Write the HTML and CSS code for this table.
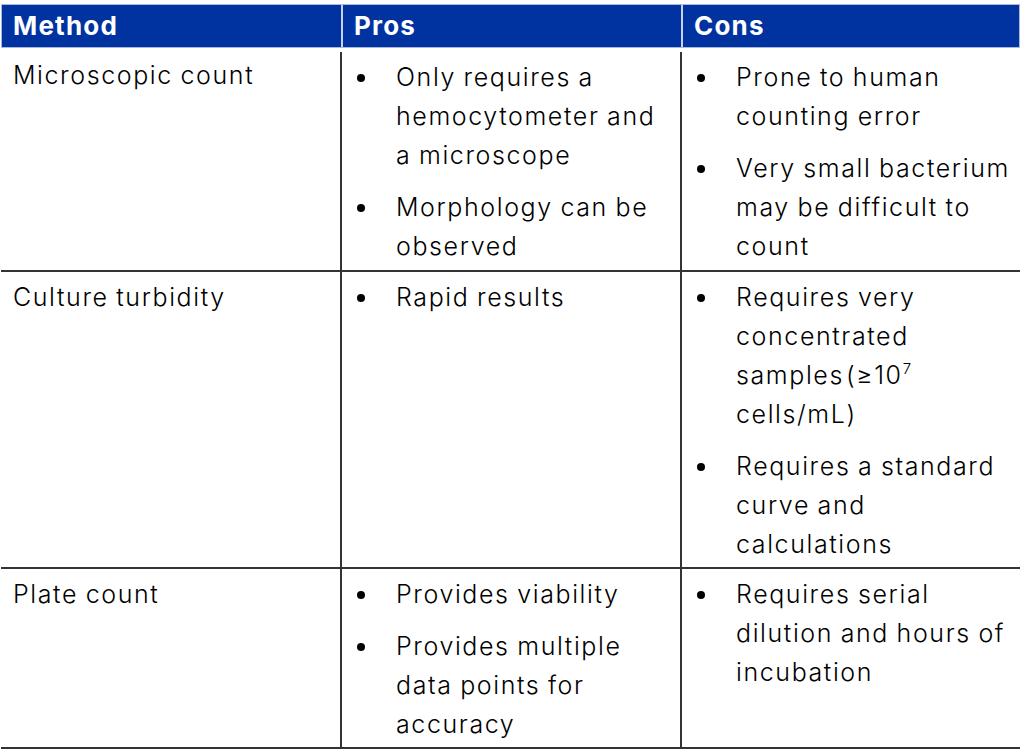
FILE: index.html
```html
<!DOCTYPE html>
<html>
<head>
<meta charset="utf-8">
<link rel="stylesheet" href="styles.css">
</head>
<body>
<div class="tbl">
  <div class="head">
    <div class="hc">Method</div>
    <div class="hc">Pros</div>
    <div class="hc">Cons</div>
  </div>
  <div class="body">
    <div class="row r1">
      <div class="c method">Microscopic count</div>
      <div class="c">
        <ul>
          <li>Only requires a<br>hemocytometer and<br>a microscope</li>
          <li>Morphology can be<br>observed</li>
        </ul>
      </div>
      <div class="c">
        <ul>
          <li>Prone to human<br>counting error</li>
          <li>Very small bacterium<br>may be difficult to<br>count</li>
        </ul>
      </div>
    </div>
    <div class="row r2">
      <div class="c method">Culture turbidity</div>
      <div class="c">
        <ul>
          <li>Rapid results</li>
        </ul>
      </div>
      <div class="c">
        <ul>
          <li>Requires very<br>concentrated<br>samples<span class="sp">(≥10<span class="sup">7</span></span><br>cells/mL)</li>
          <li>Requires a standard<br>curve and<br>calculations</li>
        </ul>
      </div>
    </div>
    <div class="row r3">
      <div class="c method">Plate count</div>
      <div class="c">
        <ul>
          <li>Provides viability</li>
          <li>Provides multiple<br>data points for<br>accuracy</li>
        </ul>
      </div>
      <div class="c">
        <ul>
          <li>Requires serial<br>dilution and hours of<br>incubation</li>
        </ul>
      </div>
    </div>
  </div>
</div>
</body>
</html>
```
FILE: styles.css
```css
html, body {
  margin: 0;
  padding: 0;
  background: #fff;
}
body {
  font-family: Inter, "Open Sans", "Liberation Sans", sans-serif;
  color: #000;
}
.tbl {
  width: 1019px;
  margin: 4px 0 0 1px;
}
.head {
  display: grid;
  grid-template-columns: 339px 340px 1fr;
  background: #0033a0;
  border: 1px solid #a9b8de;
  height: 42px;
}
.hc {
  color: #fff;
  font-weight: 700;
  font-size: 26px;
  letter-spacing: 1.2px;
  line-height: 42px;
  padding-left: 11px;
  border-left: 2px solid #c8d2ec;
}
.hc:first-child {
  border-left: none;
}
.body {
  margin-top: 4px;
}
.row {
  display: grid;
  grid-template-columns: 339px 340px 1fr;
  border-bottom: 2px solid #333;
}
.c {
  font-size: 25px;
  font-weight: 300;
  letter-spacing: 1.6px;
  word-spacing: -1px;
  line-height: 39px;
  border-left: 2px solid #333;
  white-space: nowrap;
}
.method {
  border-left: none;
  padding-left: 12px;
}
.r1 .c { padding-top: 6px; padding-bottom: 4px; }
.r1 .method { padding-top: 4px; }
.r2 .c, .r3 .c { padding-top: 6px; padding-bottom: 3px; }
ul {
  list-style: none;
  margin: 0;
  padding: 0 0 0 54px;
}
li {
  position: relative;
  margin-bottom: 13px;
}
li:last-child {
  margin-bottom: 0;
}
li::before {
  content: "";
  position: absolute;
  left: -39px;
  top: 16px;
  width: 8px;
  height: 8px;
  border-radius: 50%;
  background: #000;
}
.sp {
  margin-left: 2px;
}
.sup {
  font-size: 15px;
  line-height: 0;
  position: relative;
  top: -10px;
  margin-left: 0;
  letter-spacing: 0;
}
```
